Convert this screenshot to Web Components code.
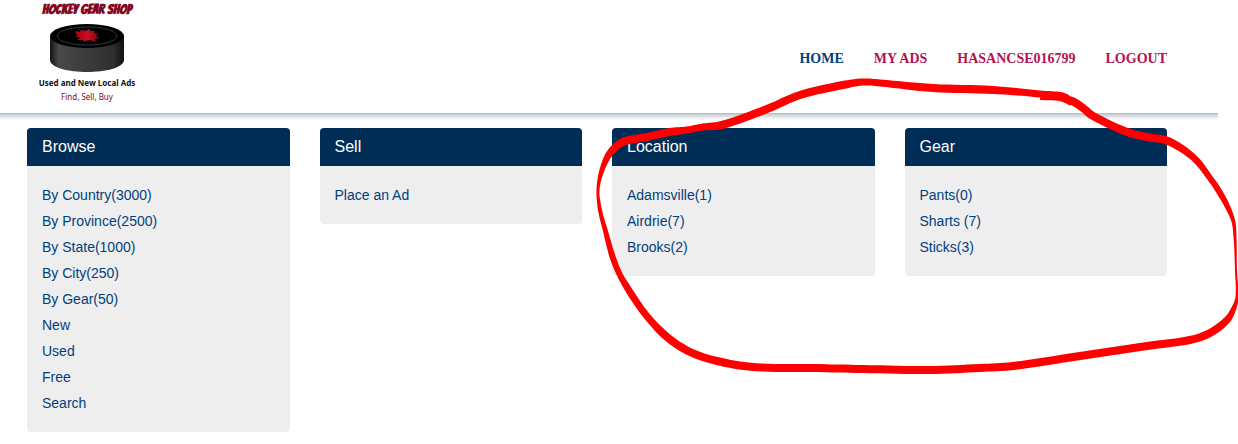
<!DOCTYPE html>
<html lang="en">
<head>
<meta charset="utf-8">
<meta name="viewport" content="width=device-width, initial-scale=1">
<title>Hockey Gear Shop</title>
<style>
  body { margin: 0; background: #fff; font-family: "Liberation Sans", Arial, sans-serif; overflow-x: hidden; }
</style>
</head>
<body>
<shop-page>
  <shop-header slot="header">
    <shop-logo slot="logo"></shop-logo>
    <nav-link href="#home" current>HOME</nav-link>
    <nav-link href="#ads">MY ADS</nav-link>
    <nav-link href="#account">HASANCSE016799</nav-link>
    <nav-link href="#logout">LOGOUT</nav-link>
  </shop-header>
  <link-panel heading="Browse">
    <panel-link href="#country">By Country(3000)</panel-link>
    <panel-link href="#province">By Province(2500)</panel-link>
    <panel-link href="#state">By State(1000)</panel-link>
    <panel-link href="#city">By City(250)</panel-link>
    <panel-link href="#gear">By Gear(50)</panel-link>
    <panel-link href="#new">New</panel-link>
    <panel-link href="#used">Used</panel-link>
    <panel-link href="#free">Free</panel-link>
    <panel-link href="#search">Search</panel-link>
  </link-panel>
  <link-panel heading="Sell">
    <panel-link href="#place">Place an Ad</panel-link>
  </link-panel>
  <link-panel heading="Location">
    <panel-link href="#adamsville">Adamsville(1)</panel-link>
    <panel-link href="#airdrie">Airdrie(7)</panel-link>
    <panel-link href="#brooks">Brooks(2)</panel-link>
  </link-panel>
  <link-panel heading="Gear">
    <panel-link href="#pants">Pants(0)</panel-link>
    <panel-link href="#sharts">Sharts (7)</panel-link>
    <panel-link href="#sticks">Sticks(3)</panel-link>
  </link-panel>
  <marker-loop slot="overlay"></marker-loop>
</shop-page>

<script>
const define = (name, html, setup) => customElements.define(name, class extends HTMLElement {
  constructor() {
    super();
    const t = document.createElement('template');
    t.innerHTML = html;
    this.attachShadow({ mode: 'open' }).append(t.content.cloneNode(true));
  }
  connectedCallback() { if (setup) setup(this, this.shadowRoot); }
});

define('shop-page', `
  <style>
    :host { display: block; position: relative; }
    main { display: grid; grid-template-columns: repeat(4, minmax(0, 1fr)); gap: 30px; align-items: start; padding: 8px 71px 12px 27px; }
  </style>
  <slot name="header"></slot>
  <main><slot></slot></main>
  <slot name="overlay"></slot>`);

define('shop-header', `
  <style>
    :host { display: block; margin-right: 20px; }
    header { display: flex; justify-content: space-between; align-items: center; padding: 2px 51px 8px 37px; }
    nav { display: flex; gap: 30px; padding-top: 10px; }
    .shade { height: 7px; background: linear-gradient(#a9b8c6, #ccd5dd 28%, #eef1f4 70%, #fff); }
  </style>
  <header><slot name="logo"></slot><nav aria-label="Main"><slot></slot></nav></header>
  <div class="shade"></div>`);

define('nav-link', `
  <style>
    :host { display: block; }
    a { display: block; font: bold 14px/20px "Roboto Slab", "Liberation Serif", serif; color: #b31250; text-decoration: none; white-space: nowrap; }
    :host([current]) a { color: #003f7d; }
  </style>
  <a><slot></slot></a>`, (el, root) => { root.querySelector('a').href = el.getAttribute('href'); });

define('shop-logo', `
  <style>
    :host { display: block; }
    a { display: flex; flex-direction: column; align-items: center; width: 100px; text-decoration: none; white-space: nowrap; }
    .name { font: bold 14px/16px "Bangers", "Roboto", sans-serif; color: #83061c; }
    svg { display: block; margin: 5px 0 4px; }
    .tag { font: bold 8px/12px "Noto Sans", sans-serif; color: #111; }
    .verbs { font: 8px/16px "Noto Sans", sans-serif; color: #83061c; }
  </style>
  <a href="#home">
    <span class="name">HOCKEY GEAR SHOP</span>
    <svg width="76" height="50" viewBox="0 0 76 50" aria-hidden="true">
      <defs>
        <linearGradient id="side"><stop offset="0" stop-color="#151515"/><stop offset=".12" stop-color="#494949"/><stop offset=".5" stop-color="#3b3b3b"/><stop offset=".85" stop-color="#303030"/><stop offset="1" stop-color="#111"/></linearGradient>
        <linearGradient id="leaf"><stop offset="0" stop-color="#a5000e"/><stop offset=".5" stop-color="#c80f20"/><stop offset="1" stop-color="#7a0510"/></linearGradient>
      </defs>
      <path d="M1 13v24c1 16 73 16 74 0V13z" fill="url(#side)"/>
      <ellipse cx="38" cy="13" rx="37" ry="12" fill="#000"/>
      <ellipse cx="38" cy="13" rx="30" ry="9" fill="none" stroke="#303744"/>
      <path d="M26 8L31 9L32 7L36 8L41 6L41 8L46 8L45 10L49 11L47 13L51 15L46 16L47 19L41 17L36 18L35 19L34 17L28 17L31 15L26 13L29 12L27 11Z" fill="url(#leaf)"/>
    </svg>
    <span class="tag">Used and New Local Ads</span>
    <span class="verbs">Find, Sell, Buy</span>
  </a>`);

define('link-panel', `
  <style>
    :host { display: block; border-radius: 4px; overflow: hidden; background: #eee; }
    h2 { margin: 0; padding: 0 15px; font-size: 16px; line-height: 38px; font-weight: normal; color: #fff; background: #002d56; }
    ul { display: block; margin: 0; padding: 16px 15px; list-style: none; }
  </style>
  <h2></h2><ul><slot></slot></ul>`, (el, root) => { root.querySelector('h2').textContent = el.getAttribute('heading'); });

define('panel-link', `
  <style>
    :host { display: block; }
    li { display: block; line-height: 26px; font-size: 14px; }
    a { color: #003f7d; text-decoration: none; }
  </style>
  <li><a><slot></slot></a></li>`, (el, root) => { root.querySelector('a').href = el.getAttribute('href'); });

/* Freehand marker stroke: each entry is x, y and pen thickness. */
const pen = [
  [1072,102,8],[1062,97,9],[1040,94,7],[993,90,8],[933,88,8],[880,83,7],[863,82,7],[843,85,8],[800,95,8],[767,109,8],
  [722,125,8],[703,127,7],[687,130,7],[670,132,8],[647,137,8],[623,142,8],[610,153,7],[602,170,5],
  [598,190,3],[600,210,4],[606,233,5],[612,255,6],[619,273,6],[630,292,7],[646,315,7],[667,337,8],
  [690,352,8],[717,361,8],[753,367,8],[813,368,8],[863,369,8],[930,370,8],[980,368,8],[1013,366,8],
  [1080,356,8],[1147,346,8],[1190,340,8],[1210,333,8],[1227,320,7],[1234,308,5],[1237,297,3],
  [1236,270,2],[1235,237,3],[1233,220,4],[1223,198,6],[1210,178,6],[1193,157,7],[1168,141,8],
  [1147,137,8],[1127,132,8],[1093,116,8],[1083,108,8],[1072,101,8],[1060,98,6],[1040,97,6]
];
define('marker-loop', `
  <style>
    :host { position: absolute; inset: 0; overflow: hidden; pointer-events: none; }
    svg { display: block; overflow: visible; }
  </style>
  <svg width="1238" height="400" viewBox="0 0 1238 400" aria-hidden="true"><path fill="#f00"/></svg>`, (el, root) => {
  const dense = [];
  for (let i = 0; i < pen.length - 1; i++) {
    const a = pen[Math.max(0, i - 1)], b = pen[i], c = pen[i + 1], d = pen[Math.min(pen.length - 1, i + 2)];
    /* Neighbour slopes are scaled to this segment's length so uneven spacing does not kink the curve. */
    const len = (p, q) => Math.hypot(p[0] - q[0], p[1] - q[1]) || 1;
    const s = len(b, c), s0 = a === b ? 0 : len(a, b), s1 = c === d ? 0 : len(c, d);
    for (let t = 0; t < 1; t += 0.125) {
      const t2 = t * t, t3 = t2 * t;
      dense.push(b.map((_, k) => {
        const m0 = (c[k] - a[k]) * s / (s + s0), m1 = (d[k] - b[k]) * s / (s + s1);
        return (2 * t3 - 3 * t2 + 1) * b[k] + (t3 - 2 * t2 + t) * m0 + (3 * t2 - 2 * t3) * c[k] + (t3 - t2) * m1;
      }));
    }
  }
  dense.push(pen[pen.length - 1]);
  const left = [], right = [];
  dense.forEach(([x, y, w], i) => {
    const p = dense[Math.max(0, i - 1)], n = dense[Math.min(dense.length - 1, i + 1)];
    const dx = n[0] - p[0], dy = n[1] - p[1], l = Math.hypot(dx, dy) || 1;
    left.push([x - dy / l * w / 2, y + dx / l * w / 2]);
    right.unshift([x + dy / l * w / 2, y - dx / l * w / 2]);
  });
  root.querySelector('path').setAttribute('d', 'M' + left.concat(right).map(p => p.map(v => v.toFixed(1)).join(' ')).join('L') + 'Z');
});
</script>
</body>
</html>
